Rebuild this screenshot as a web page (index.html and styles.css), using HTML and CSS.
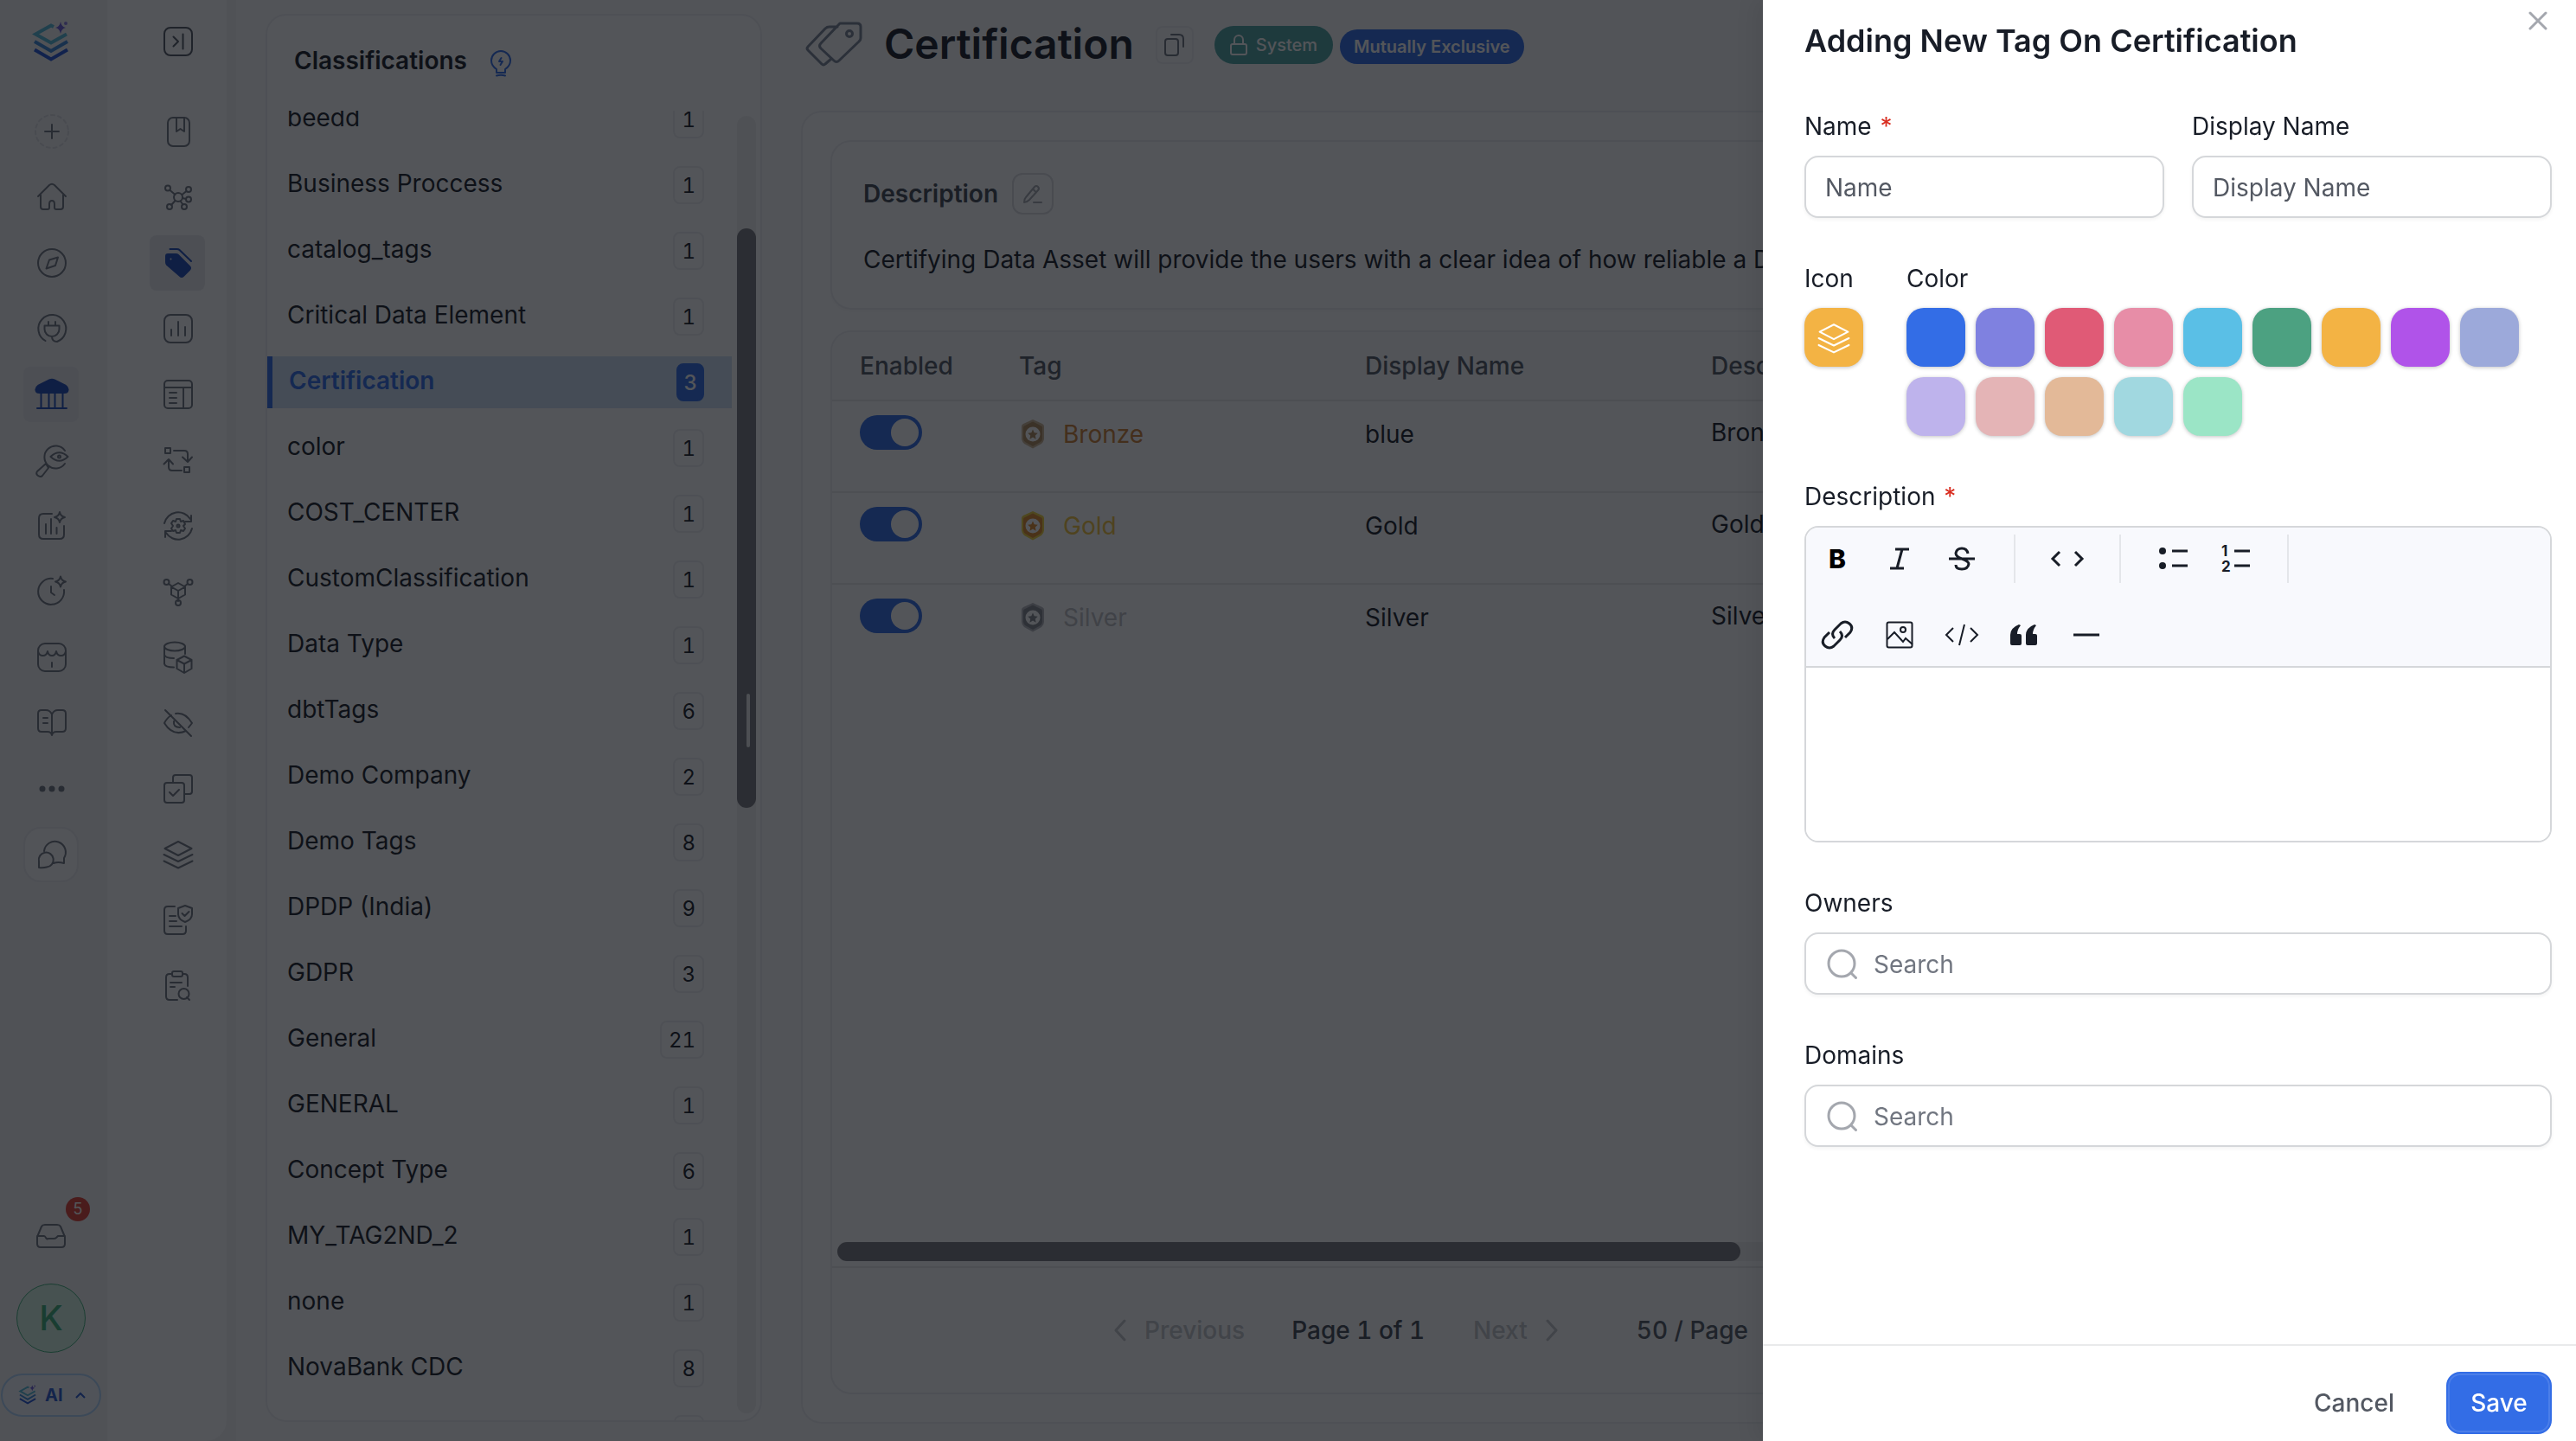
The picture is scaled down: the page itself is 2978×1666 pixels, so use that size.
FILE: index.html
```html
<!DOCTYPE html>
<html lang="en">
<head>
<meta charset="utf-8">
<title>Certification</title>
<link rel="stylesheet" href="styles.css">
</head>
<body>
<svg class="sprite" aria-hidden="true">
  <defs>
    <symbol id="logo" viewBox="0 0 44 50">
      <path d="M25 7 L22 5.500 L4 15.500 L22 25.500 L40 15.500" fill="none" stroke="#54b9d6" stroke-width="4"/>
      <path d="M3 24 L22 35 L41 24" fill="none" stroke="#3a87d8" stroke-width="4"/>
      <path d="M3 33.500 L22 44.500 L41 33.500" fill="none" stroke="#2456d6" stroke-width="4"/>
      <path d="M33 1 q1 6 6 7 q-5 1-6 7 q-1-6-6-7 q5-1 6-7z" fill="#6a5ad8" stroke="none"/>
      <circle cx="39" cy="3" r="2" fill="#8a7ae0" stroke="none"/>
    </symbol>
    <symbol id="layers" viewBox="0 0 36 36">
      <path d="M18 4 L33.500 12 L18 20 L2.500 12z M1.500 19 L18 27 L34.500 19 M1.500 26.500 L18 34.500 L34.500 26.500"/>
    </symbol>
    <symbol id="search" viewBox="0 0 36 36">
      <circle cx="17" cy="17" r="15"/><path d="M28 28 l5.500 5.500"/>
    </symbol>
    <symbol id="shield" viewBox="0 0 26 34">
      <path class="shield-edge" d="M13 0 L24 5 q2 1 2 3 V22 q0 3-3 6 L13 33.500 L3 28 q-3-3-3-6 V8 q0-2 2-3z"/>
      <path class="shield-core" d="M13 2.500 L23 7.500 q1 .5 1 2 V22 q0 2-2 4 L13 31 L4 26 q-2-2-2-4 V9.500 q0-1.500 1-2z"/>
      <circle cx="13" cy="17" r="8.500" fill="#fff"/>
      <path class="shield-core" d="M13 11.500 l1.700 3.800 4.100.5-3 2.800.8 4.100-3.600-2.100-3.600 2.100.8-4.100-3-2.800 4.100-.5z"/>
    </symbol>
  </defs>
</svg>

<div class="app">
  <nav class="rail" aria-label="Main">
    <a class="logo" href="#" aria-label="Home page"><svg width="44" height="50"><use href="#logo"/></svg></a>
    <div class="rail-items">
      <button class="rail-item" aria-label="Create"><svg class="ico" viewBox="0 0 40 40"><circle cx="20" cy="20" r="19" stroke-dasharray="4 4" stroke="#dcdde1"/><path d="M20 12v16M12 20h16"/></svg></button>
      <a class="rail-item" href="#" aria-label="Home"><svg class="ico" viewBox="0 0 40 40"><path d="M4 19 L17 6 q3-2.500 6 0 L36 19 M7 17 V31 q0 3 3 3 h5 q2 0 2-2 v-4 q0-4 3-4 t3 4 v4 q0 2 2 2 h5 q3 0 3-3 V17"/></svg></a>
      <a class="rail-item" href="#" aria-label="Explore"><svg class="ico" viewBox="0 0 40 40"><circle cx="20" cy="20" r="16"/><path d="M17 16.500 L27 13.500 L24 23 L13.500 26.500z"/></svg></a>
      <a class="rail-item" href="#" aria-label="Connections"><svg class="ico" viewBox="0 0 40 40"><path d="M12.500 34 A16 16 0 1 1 26 35 Q20 35 20 29 M11.500 16.500 h17 v4 a8.500 8.500 0 0 1-17 0z M16 12v4 M24 12v4"/></svg></a>
      <a class="rail-item active" href="#" aria-label="Govern"><svg class="ico" viewBox="0 0 40 40"><path fill="currentColor" d="M17 3.500 q3-1.500 6 0 L36 10 q3 2 2.500 5 t-4 3 H5.500 q-3.500 0-4-3 T4 10z"/><path d="M7.500 19v16M16.500 19v16M23.500 19v16M32.500 19v16M3 36h34"/></svg></a>
      <a class="rail-item" href="#" aria-label="Observability"><svg class="ico" viewBox="0 0 40 40"><path d="M35 9 A13 13 0 1 0 35 24 M18.500 16 q10-9.500 20 0 q-10 9.500-20 0z M13 24 L3 33 q-2 3 1 5 t5 0 L16 29z"/><circle cx="28.500" cy="16" r="1.500"/></svg></a>
      <a class="rail-item" href="#" aria-label="Insights"><svg class="ico" viewBox="0 0 40 40"><path d="M20 6 H10 q-5 0-5 5 v19 q0 5 5 5 h19 q5 0 5-5 V20 M13 18v11 M19 12v17 M25.500 22v7 M29 4 q1 5 6 6 q-5 1-6 6 q-1-5-6-6 q5-1 6-6z"/></svg></a>
      <a class="rail-item" href="#" aria-label="Activity"><svg class="ico" viewBox="0 0 40 40"><path d="M21 5 A15 15 0 1 0 34 18 M19 14v7l4 3 M30 2.500 q1 5 6 6 q-5 1-6 6 q-1-5-6-6 q5-1 6-6z"/></svg></a>
      <a class="rail-item" href="#" aria-label="Marketplace"><svg class="ico" viewBox="0 0 40 40"><rect x="4" y="4" width="32" height="32" rx="8"/><path d="M4 13 q1 5 5.500 5 t5.500-5 q1 5 5 5 t5-5 q1 5 5.500 5 t5.500-5 M20 26v5"/></svg></a>
      <a class="rail-item" href="#" aria-label="Learning"><svg class="ico" viewBox="0 0 40 40"><path d="M20 10 q-2-5-7-5 H8 q-4 0-4 4 v17 q0 4 4 4 h7 q4 0 5 4 q1-4 5-4 h7 q4 0 4-4 V9 q0-4-4-4 h-5 q-5 0-7 5 v23 M10 14h5 M10 20h5"/></svg></a>
      <button class="rail-item" aria-label="More"><svg class="ico" viewBox="0 0 40 40"><g fill="currentColor" stroke="none"><circle cx="9" cy="20" r="3.500"/><circle cx="20" cy="20" r="3.500"/><circle cx="31" cy="20" r="3.500"/></g></svg></button>
      <button class="rail-item boxed" aria-label="Chat"><svg class="ico" viewBox="0 0 40 40"><path d="M11 16 A12.500 12.500 0 1 1 34 24 V30 q-7-2-12 0 M5 35 V28 a8.500 8.500 0 1 1 9 6.500 q-4 1-9 .5z"/></svg></button>
    </div>
    <div class="rail-foot">
      <button class="inbox" aria-label="Notifications"><svg class="ico" viewBox="0 0 40 40"><path d="M4 22 L9 10 q1-2 4-2 h14 q3 0 4 2 l5 12 v8 q0 4-4 4 H8 q-4 0-4-4z M4 21 h8 q1 0 2 2 t3 1 h6 q2 0 3-1 t2-2 h8"/></svg><span class="inbox-count">5</span></button>
      <button class="avatar">K</button>
      <button class="ai"><svg width="22" height="24"><use href="#logo"/></svg>AI<svg class="ai-caret" viewBox="0 0 14 10"><path d="M2 8 L7 3 L12 8"/></svg></button>
    </div>
  </nav>

  <nav class="rail subrail" aria-label="Govern">
    <button class="expand" aria-label="Expand"><svg class="ico" viewBox="0 0 40 40"><rect x="4" y="4" width="32" height="32" rx="7"/><path d="M14.500 14.500 L20 20 L14.500 25.500 M25.500 11.500v17"/></svg></button>
    <div class="rail-items">
      <a class="rail-item" href="#" aria-label="Glossary"><svg class="ico" viewBox="0 0 40 40"><rect x="8" y="4" width="25" height="33" rx="6"/><path d="M18 4 V20 l4.500-3 l4.500 3 V4"/></svg></a>
      <a class="rail-item" href="#" aria-label="Ontology"><svg class="ico" viewBox="0 0 40 40"><circle cx="20" cy="20" r="5"/><circle cx="8" cy="9.500" r="3"/><circle cx="32" cy="11" r="3"/><circle cx="32" cy="22.500" r="3"/><circle cx="27" cy="31" r="3"/><circle cx="10" cy="31" r="3"/><path d="M10.500 12 l6 5 M24.500 17 l5-4 M25 21 l4 1 M22.500 24.500 l3 4 M16.500 24 L12 29"/></svg></a>
      <a class="rail-item active" href="#" aria-label="Tags"><svg class="ico" viewBox="0 0 40 40"><path fill="currentColor" fill-rule="evenodd" d="M6 12 q0-2 2-2 h9 q2 0 3 1 L33 24 q2 2 0 4 l-7 7 q-2 2-4 0 L7 22 q-1-1-1-3z M11.500 17.500 a2 2 0 1 0 0-4 a2 2 0 0 0 0 4z"/><path d="M10.500 4 h8 q2 0 3 1 L35 18"/></svg></a>
      <a class="rail-item" href="#" aria-label="Metrics"><svg class="ico" viewBox="0 0 40 40"><rect x="4" y="4" width="32" height="32" rx="7"/><path d="M12 21v7 M20 12v16 M28 18v10"/></svg></a>
      <a class="rail-item" href="#" aria-label="Data contracts"><svg class="ico" viewBox="0 0 40 40"><rect x="4" y="4" width="32" height="32" rx="4"/><path d="M4 12h32 M26 12v24 M10 18h8 M10 24h8 M10 30h8"/></svg></a>
      <a class="rail-item" href="#" aria-label="Workflows"><svg class="ico" viewBox="0 0 40 40"><rect x="5" y="6" width="6" height="6"/><rect x="27" y="28" width="6" height="6"/><path d="M15 9 h12 q4 0 4 4 v8 M25 16.500 l6 5.500 l5-5.500 M24 32 H13 q-4 0-4-4 v-8 M3.500 24.500 L9 19 l5 5.500"/></svg></a>
      <a class="rail-item" href="#" aria-label="Automations"><svg class="ico" viewBox="0 0 40 40"><path d="M4 17 A16.500 16.500 0 0 1 34 12 M35 8 v7 h-7 M36 23 A16.500 16.500 0 0 1 6 28 M5 33 v-7 h7"/><path d="M18 12 h4 l1 3 3-1 2 4-2 2 2 3-2 3-3-1-1 3 h-4 l-1-3-3 1-2-3 2-3-2-3 2-3 3 1z"/><circle cx="20" cy="20" r="1.500"/></svg></a>
      <a class="rail-item" href="#" aria-label="Data products"><svg class="ico" viewBox="0 0 40 40"><path d="M20 10 l8 4.500 v9 L20 28 l-8-4.500 v-9z M12 14.500 l8 4.500 l8-4.500 M20 19v12 M9 11 l4 3 M31 11 l-4 3"/><circle cx="6.500" cy="9" r="3"/><circle cx="33.500" cy="9" r="3"/><circle cx="20" cy="33" r="3"/></svg></a>
      <a class="rail-item" href="#" aria-label="Data assets"><svg class="ico" viewBox="0 0 40 40"><ellipse cx="16" cy="7.500" rx="12" ry="5"/><path d="M4 7.500 v20 q1 4 11 4 M28 7.500 V16 M4 17 q1 4 11 4 M27 18.500 l8.500 4.500 v10 L27 38 l-8.500-5 V23z M18.500 23 l8.500 4.500 l8.500-4.500 M27 28v9"/></svg></a>
      <a class="rail-item" href="#" aria-label="Masking"><svg class="ico" viewBox="0 0 40 40"><path d="M17 9 q11-2 19 11 l-4 5 M12 11 q-5 3-8 9 q10 16 25 9 M15 18 q-1 7 7 7 M5 5 L35 35"/></svg></a>
      <a class="rail-item" href="#" aria-label="Tasks"><svg class="ico" viewBox="0 0 40 40"><rect x="4" y="13" width="23" height="23" rx="3"/><path d="M14 13 V7 q0-3 3-3 h16 q3 0 3 3 v16 q0 3-3 3 h-6 M10 24 l4 4 l7-7"/></svg></a>
      <a class="rail-item" href="#" aria-label="Domains"><svg class="ico" viewBox="-2 -1 40 40"><use href="#layers" width="36" height="36"/></svg></a>
      <a class="rail-item" href="#" aria-label="Policies"><svg class="ico" viewBox="0 0 40 40"><path d="M16 4 H8 q-4 0-4 4 v24 q0 4 4 4 h17 q4 0 4-4 V27 M10 15h7 M10 21h8 M10 27h14 M28 3 l8 3 v7 q0 6-8 9 q-8-3-8-9 V6z M24.500 12 l3 3 l5-5"/></svg></a>
      <a class="rail-item" href="#" aria-label="Audit"><svg class="ico" viewBox="0 0 40 40"><rect x="13" y="3" width="12" height="6" rx="2"/><path d="M13 6 h-3 q-4 0-4 4 v22 q0 4 4 4 h9 M25 6 h2 q4 0 4 4 v10 M11 16h13 M11 21h5 M30 33 l3 3"/><circle cx="26.500" cy="29" r="6"/></svg></a>
    </div>
  </nav>

  <main class="content">
    <section class="side-card">
      <h2 class="side-title">Classifications
        <svg class="bulb" viewBox="0 0 24 34"><path d="M7 26 v-4 Q1 18 1 12 A11 11 0 0 1 23 12 Q23 18 17 22 v4z M7 29.500 q5-1.500 10 0 M12.500 9 l-2.500 4 h4 l-2.500 4"/></svg>
      </h2>
      <div class="side-body">
        <ul class="class-list">
          <li><a href="#" class="class-row"><span>beedd</span><b>1</b></a></li>
          <li><a href="#" class="class-row"><span>Business Proccess</span><b>1</b></a></li>
          <li><a href="#" class="class-row"><span>catalog_tags</span><b>1</b></a></li>
          <li><a href="#" class="class-row"><span>Critical Data Element</span><b>1</b></a></li>
          <li><a href="#" class="class-row selected"><span>Certification</span><b>3</b></a></li>
          <li><a href="#" class="class-row"><span>color</span><b>1</b></a></li>
          <li><a href="#" class="class-row"><span>COST_CENTER</span><b>1</b></a></li>
          <li><a href="#" class="class-row"><span>CustomClassification</span><b>1</b></a></li>
          <li><a href="#" class="class-row"><span>Data Type</span><b>1</b></a></li>
          <li><a href="#" class="class-row"><span>dbtTags</span><b>6</b></a></li>
          <li><a href="#" class="class-row"><span>Demo Company</span><b>2</b></a></li>
          <li><a href="#" class="class-row"><span>Demo Tags</span><b>8</b></a></li>
          <li><a href="#" class="class-row"><span>DPDP (India)</span><b>9</b></a></li>
          <li><a href="#" class="class-row"><span>GDPR</span><b>3</b></a></li>
          <li><a href="#" class="class-row"><span>General</span><b>21</b></a></li>
          <li><a href="#" class="class-row"><span>GENERAL</span><b>1</b></a></li>
          <li><a href="#" class="class-row"><span>Concept Type</span><b>6</b></a></li>
          <li><a href="#" class="class-row"><span>MY_TAG2ND_2</span><b>1</b></a></li>
          <li><a href="#" class="class-row"><span>none</span><b>1</b></a></li>
          <li><a href="#" class="class-row"><span>NovaBank CDC</span><b>8</b></a></li>
          <li><a href="#" class="class-row"><span></span><b></b></a></li>
        </ul>
        <div class="vscroll"><div class="vthumb"></div></div>
      </div>
      <span class="splitter"></span>
    </section>

    <section class="detail">
      <header class="detail-head">
        <svg class="tags-icon" viewBox="0 0 66 52"><path d="M40 2 H60 q4 0 4 4 V19 q0 2-2 4 L39 45 q-3 3-6 0 L18 31 q-3-3 0-6z M37 6 H28 q-3 0-5 2 L3 29 q-2 2 0 4 L19 49 q2 2 4 0 L30 43"/><circle cx="51" cy="14" r="3.500"/></svg>
        <h1>Certification</h1>
        <button class="copy" aria-label="Copy"><svg viewBox="0 0 24 28"><rect x="1" y="7" width="15" height="19" rx="3"/><path d="M8 2 h9 q5 0 5 5 v9"/></svg></button>
        <span class="pill system"><svg viewBox="0 0 20 24"><rect x="1" y="11" width="18" height="12" rx="2"/><path d="M5 11 V6 a5 5 0 0 1 10 0 v5"/></svg>System</span>
        <span class="pill exclusive">Mutually Exclusive</span>
      </header>
      <div class="detail-card">
        <section class="desc-card">
          <h3>Description <button class="edit" aria-label="Edit description"><svg viewBox="0 0 24 24"><path d="M14 4 q2-2 4 0 t0 4 L8 19 q-3 3-6 3 q0-4 2-6z M12 6.500 l4 4 M13 22h9"/></svg></button></h3>
          <p>Certifying Data Asset will provide the users with a clear idea of how reliable a Data Asset is.</p>
        </section>
        <section class="table-card">
          <div class="table-wrap">
            <table>
              <thead><tr><th class="c-on">Enabled</th><th class="c-mid">Tag</th><th class="c-mid">Display Name</th><th>Description</th></tr></thead>
              <tbody>
                <tr><td><input class="switch" type="checkbox" role="switch" aria-label="Enable Bronze" checked></td><td><a href="#" class="tag bronze"><svg><use href="#shield"/></svg>Bronze</a></td><td><span class="cell">blue</span></td><td>Bronze certified Data Asset.</td></tr>
                <tr><td><input class="switch" type="checkbox" role="switch" aria-label="Enable Gold" checked></td><td><a href="#" class="tag gold"><svg><use href="#shield"/></svg>Gold</a></td><td><span class="cell">Gold</span></td><td>Gold certified Data Asset.</td></tr>
                <tr class="last"><td><input class="switch" type="checkbox" role="switch" aria-label="Enable Silver" checked></td><td><a href="#" class="tag silver"><svg><use href="#shield"/></svg>Silver</a></td><td><span class="cell">Silver</span></td><td>Silver certified Data Asset.</td></tr>
              </tbody>
            </table>
          </div>
          <div class="hscroll"><div class="hthumb"></div></div>
          <footer class="pager">
            <button class="pg-off" disabled><svg viewBox="0 0 16 26"><path d="M13 2 L3 13 L13 24"/></svg>Previous</button>
            <span class="pg-now">Page 1 of 1</span>
            <button class="pg-off" disabled>Next<svg viewBox="0 0 16 26"><path d="M3 2 L13 13 L3 24"/></svg></button>
            <button class="pg-size">50 / Page</button>
          </footer>
        </section>
      </div>
    </section>
  </main>
</div>

<div class="mask"></div>
<form class="drawer" role="dialog" aria-labelledby="drawer-title">
  <div class="drawer-body">
    <h2 id="drawer-title">Adding New Tag On Certification</h2>
    <button class="close" type="button" aria-label="Close"><svg viewBox="0 0 22 22"><path d="M2 2 L20 20 M20 2 L2 20"/></svg></button>
    <div class="pair">
      <div class="field"><label for="name">Name <i>*</i></label><input id="name" class="box" type="text" placeholder="Name"></div>
      <div class="field"><label for="dname">Display Name</label><input id="dname" class="box" type="text" placeholder="Display Name"></div>
    </div>
    <div class="icon-color">
      <div class="field icon-field"><label for="icon">Icon</label><button id="icon" class="swatch icon-pick" type="button"><svg><use href="#layers"/></svg></button></div>
      <div class="field color-field" role="radiogroup" aria-labelledby="color-label"><span id="color-label" class="label">Color</span>
        <div class="swatches">
          <input type="radio" name="color" aria-label="Blue" class="swatch s1"><input type="radio" name="color" aria-label="Indigo" class="swatch s2"><input type="radio" name="color" aria-label="Red" class="swatch s3"><input type="radio" name="color" aria-label="Pink" class="swatch s4"><input type="radio" name="color" aria-label="Sky" class="swatch s5"><input type="radio" name="color" aria-label="Green" class="swatch s6"><input type="radio" name="color" aria-label="Amber" class="swatch s7"><input type="radio" name="color" aria-label="Purple" class="swatch s8"><input type="radio" name="color" aria-label="Periwinkle" class="swatch s9"><input type="radio" name="color" aria-label="Lavender" class="swatch s10"><input type="radio" name="color" aria-label="Rose" class="swatch s11"><input type="radio" name="color" aria-label="Tan" class="swatch s12"><input type="radio" name="color" aria-label="Aqua" class="swatch s13"><input type="radio" name="color" aria-label="Mint" class="swatch s14">
        </div>
      </div>
    </div>
    <div class="field">
      <label for="desc">Description <i>*</i></label>
      <div class="editor">
        <div class="toolbar" role="toolbar">
          <button type="button" class="bold" aria-label="Bold">B</button>
          <button type="button" aria-label="Italic"><svg viewBox="0 0 40 40"><path d="M15 9h16 M9 31h16 M23 9 L17 31"/></svg></button>
          <button type="button" aria-label="Strikethrough"><svg viewBox="0 0 40 40"><path d="M27 14 q-1-6-7-6 t-7 5.500 q0 4 7 6.500 q8 3 8 6 q-1 6-8 6 t-7-5 M5 20h30"/></svg></button>
          <span class="sep"></span>
          <button type="button" aria-label="Inline code"><svg viewBox="0 0 40 40"><path d="M11 12 L3 20 L11 28 M29 12 L37 20 L29 28"/></svg></button>
          <span class="sep"></span>
          <button type="button" aria-label="Bulleted list"><svg viewBox="0 0 40 40"><g fill="#181d27" stroke="none"><circle cx="8" cy="11" r="4"/><circle cx="8" cy="28" r="4"/></g><path d="M19 11h18 M19 28h18"/></svg></button>
          <button type="button" aria-label="Numbered list"><svg viewBox="0 0 40 40"><text x="4" y="17">1</text><text x="4" y="35">2</text><path d="M19 11h18 M19 28h18"/></svg></button>
          <span class="sep"></span>
          <button type="button" aria-label="Link"><svg viewBox="0 0 40 40"><path d="M17 24 q-5-5 0-10 l7-7 q5-4 10 0 t1 10 L29 23 M23 16 q5 5 0 10 l-7 7 q-5 4-10 0 t-1-10 L11 17"/></svg></button>
          <button type="button" aria-label="Image"><svg class="thin" viewBox="0 0 40 40"><rect x="5.500" y="5.500" width="29" height="29" rx="2"/><circle cx="24" cy="14" r="3"/><path d="M6 25 l8-8 l10 11 l3-4 l8 7"/></svg></button>
          <button type="button" aria-label="Code block"><svg class="thin" viewBox="0 0 40 40"><path d="M10 12 L2 20 L10 28 M30 12 L38 20 L30 28 M23 8 L17 32"/></svg></button>
          <button type="button" aria-label="Quote"><svg viewBox="0 0 40 40"><path fill="#181d27" stroke="none" d="M14 8 l2 1 q-4 5-4 10 h3 q2 0 2 2 v9 q0 2-2 2 H6 q-2 0-2-2 v-10 q0-8 10-12z M32 8 l2 1 q-4 5-4 10 h3 q2 0 2 2 v9 q0 2-2 2 h-9 q-2 0-2-2 v-10 q0-8 10-12z"/></svg></button>
          <button type="button" aria-label="Divider"><svg viewBox="0 0 40 40"><path d="M5 20h30"/></svg></button>
        </div>
        <textarea id="desc"></textarea>
      </div>
    </div>
    <div class="field"><label for="owners">Owners</label><div class="box search"><svg><use href="#search"/></svg><input id="owners" type="text" placeholder="Search"></div></div>
    <div class="field"><label for="domains">Domains</label><div class="box search"><svg><use href="#search"/></svg><input id="domains" type="text" placeholder="Search"></div></div>
  </div>
  <footer class="drawer-foot">
    <button type="button" class="cancel">Cancel</button>
    <button type="submit" class="save">Save</button>
  </footer>
</form>
</body>
</html>
```
FILE: styles.css
```css
* { box-sizing: border-box; }
body {
  margin: 0;
  background: #f5f5f6;
  color: #181d27;
  font: 400 28px/40px Inter, "Noto Sans", sans-serif;
  overflow: hidden;
}
h1, h2, h3, p, ul { margin: 0; padding: 0; list-style: none; }
a { color: inherit; text-decoration: none; }
button { margin: 0; padding: 0; border: 0; background: none; color: inherit; font: inherit; cursor: pointer; }
svg { fill: none; stroke: currentColor; stroke-width: 2; stroke-linecap: round; stroke-linejoin: round; flex: none; }
.sprite { position: absolute; width: 0; height: 0; }

.app { display: flex; height: 100vh; }

/* Navigation rails */
.rail {
  display: flex;
  flex-direction: column;
  flex: none;
  width: 124px;
  padding: 24px 33px 24px 27px;
  background: #f5f5f6;
  color: #717680;
}
.logo { display: flex; height: 50px; margin-bottom: 46px; padding-left: 10px; }
.logo svg, .ai svg { stroke-linecap: butt; stroke-linejoin: miter; }
.rail-items { display: flex; flex-direction: column; gap: 12px; }
.rail-item, .expand { display: flex; align-items: center; justify-content: center; width: 64px; height: 64px; border-radius: 8px; }
.ico { width: 40px; height: 40px; }
.rail-items .ico, .expand .ico { margin-left: 2px; }
.rail-item.active { background: #ebebee; color: #1d4ab8; }
.rail-item.boxed { border: 2px solid #eaeaed; border-radius: 20px; background: #fafafa; }
.subrail { width: 138px; padding: 16px 25px 24px 49px; background: #fdfdfd; border-radius: 0 0 24px 0; }
.expand { color: #535862; margin-bottom: 40px; }
.rail-foot { display: flex; flex-direction: column; align-items: center; gap: 36px; margin: auto -27px 4px; }
.inbox { position: relative; display: flex; }
.inbox-count {
  position: absolute; left: 37px; top: -24px; width: 28px; height: 28px; border-radius: 50%;
  background: #df4034; color: #fff; font-size: 18px; line-height: 28px; text-align: center;
}
.avatar { width: 80px; height: 80px; border: 1px solid #3fae79; border-radius: 50%; background: #d8f6e4; color: #3fae79; font-size: 40px; font-weight: 500; margin-bottom: -12px; }
.ai { display: flex; align-items: center; gap: 9px; width: 116px; height: 50px; padding-left: 18px; border: 2px solid #b2d6fb; border-radius: 25px; background: #f5f9ff; color: #2a5bd0; font-size: 20px; font-weight: 700; }
.ai-caret { width: 14px; height: 10px; margin-left: 4px; }

/* Page content */
.content {
  display: grid;
  grid-template-columns: minmax(320px, 574px) minmax(0, 1fr);
  gap: 45px;
  flex: 1;
  min-width: 0;
  margin-left: 11px;
  padding: 16px 34px 20px 34px;
  background: #fbfbfc;
}
.side-card { position: relative; display: flex; flex-direction: column; min-height: 0; margin-bottom: 2px; border: 2px solid #eeeff1; border-radius: 24px; background: #fff; overflow: hidden; }
.side-title { display: flex; gap: 27px; margin: 32px 0 36px 31px; font-size: 28px; font-weight: 600; }
.bulb { width: 24px; height: 34px; margin-top: 8px; color: #2f6be6; }
.side-body { display: flex; flex: 1; min-height: 0; }
.class-list { flex: 1; overflow: hidden; }
.class-list li { margin-bottom: 16px; }
.class-list li:first-child { margin-top: -20px; }
.class-row { display: flex; align-items: flex-start; justify-content: space-between; height: 60px; padding: 8px 32px 8px 23px; }
.class-row b { min-width: 35px; height: 44px; padding: 0 8px; border: 2px solid #eeeff1; border-radius: 8px; font-size: 24px; font-weight: 400; line-height: 42px; text-align: center; font-variant-numeric: tabular-nums; }
.class-row.selected { border-left: 6px solid #2f6be6; padding-left: 19px; background: #cfe2f5; color: #2f6be6; font-weight: 600; }
.class-row.selected b { min-width: 31px; padding: 0 6px; border-color: #2f6be6; background: #2f6be6; color: #fff; font-weight: 500; }
.vscroll { flex: none; width: 22px; margin: 6px 5px 8px 6px; border-radius: 11px; background: #f1f1f1; }
.vthumb { height: 670px; margin-top: 130px; border-radius: 11px; background: #7b7b80; }
.splitter { position: absolute; right: 12px; top: 784px; width: 4px; height: 62px; border-radius: 2px; background: #e9eaeb; }

.detail { display: flex; flex-direction: column; min-width: 0; }
.detail-head { display: flex; align-items: flex-end; height: 112px; padding: 0 0 54px 5px; }
.tags-icon { width: 66px; height: 52px; margin-bottom: -3px; color: #7a8494; stroke-width: 3px; }
h1 { margin: 0 25px; font-size: 48px; font-weight: 600; line-height: 46px; }
.copy, .edit { display: flex; align-items: center; justify-content: center; width: 44px; height: 44px; border: 2px solid #eeeff1; border-radius: 8px; color: #717680; }
.copy svg { width: 24px; height: 28px; }
.pill { display: flex; align-items: center; color: #fff; border-radius: 22px; font-size: 20px; font-weight: 500; }
.system { gap: 10px; height: 44px; margin: 0 8px 0 24px; padding: 0 18px; background: #4da3a1; }
.system svg { width: 20px; height: 24px; }
.exclusive { height: 40px; padding: 0 16px; background: #2f6be6; font-weight: 600; }
.detail-card { display: flex; flex-direction: column; gap: 24px; flex: 1; min-height: 0; padding: 32px; border: 2px solid #eeeff1; border-radius: 24px; background: #fff; }
.desc-card { padding: 36px; border: 2px solid #eeeff1; border-radius: 24px; box-shadow: 0 2px 4px #0a0d1208; }
.desc-card h3 { display: flex; align-items: center; gap: 16px; margin-bottom: 32px; color: #414651; font-size: 28px; font-weight: 600; }
.edit { width: 48px; height: 48px; border-color: #dcdde0; border-radius: 12px; color: #a4a7ae; }
.edit svg { width: 24px; height: 24px; }
.table-card { display: flex; flex-direction: column; flex: 1; min-height: 0; border: 2px solid #eeeff1; border-radius: 24px; overflow: hidden; }
.table-wrap { flex: 1; }
table { width: 100%; table-layout: fixed; border-collapse: separate; border-spacing: 0; }
th, td { padding: 0 16px 0 32px; border-bottom: 2px solid #e9eaeb; text-align: left; vertical-align: top; }
th { height: 80px; vertical-align: middle; background: #fafafa; color: #535862; font-weight: 500; }
td { height: 106px; padding-top: 16px; }
.last td { border-bottom: 0; }
.c-on { width: 184px; }
.c-mid { width: 400px; }
.cell { line-height: 44px; }
.tag { display: flex; align-items: center; gap: 22px; height: 44px; padding-left: 3px; }
.tag svg { width: 26px; height: 34px; stroke: none; }
.shield-core { fill: currentColor; }
.bronze { color: #cd7f32; }
.bronze svg { color: #b08a5a; }
.bronze svg { fill: #cdb595; }
.gold { color: #f0c43c; }
.gold svg { color: #e08a28; fill: #f0d23c; }
.silver { color: #c0c0c4; }
.silver svg { color: #84868c; fill: #b4b6bb; }
.switch { appearance: none; display: block; width: 72px; height: 40px; margin: 0; padding: 4px; border-radius: 20px; background: #2f6be6; }
.switch::before { content: ""; display: block; width: 32px; height: 32px; margin-left: 32px; border-radius: 50%; background: #fff; }
.hscroll { height: 22px; margin: 0 6px 6px; border-radius: 11px; background: #f1f1f1; }
.hthumb { width: 1044px; height: 22px; border-radius: 11px; background: #7b7b80; }
.pager { display: flex; align-items: center; height: 146px; padding-left: 325px; border-top: 2px solid #e9eaeb; font-weight: 500; }
.pager button { display: flex; align-items: center; gap: 20px; }
.pager svg { width: 16px; height: 26px; stroke-width: 3px; }
.pg-off, .pg-off:disabled { color: #c4c5c9; }
.pg-now { margin: 0 56px 0 54px; color: #414651; font-variant-numeric: tabular-nums; }
.pager .pg-size { margin-left: 90px; color: #535862; font-variant-numeric: tabular-nums; }

/* Drawer */
.mask { position: fixed; inset: 0; background: rgba(10, 13, 18, .7); }
.drawer { position: fixed; top: 0; right: 0; bottom: 0; display: flex; flex-direction: column; width: 940px; max-width: 100%; background: #fff; box-shadow: -8px 0 24px #0a0d1214; }
.drawer-body { position: relative; display: flex; flex-direction: column; gap: 50px; flex: 1; padding: 23px 28px 0 48px; }
.drawer h2 { margin-bottom: 5px; font-size: 36px; font-weight: 600; line-height: 48px; }
.close { position: absolute; right: 33px; top: 13px; display: flex; color: #a4a7ae; }
.close svg { width: 22px; height: 22px; stroke-width: 3px; }
.field { display: flex; flex-direction: column; gap: 14px; min-width: 0; }
label, .label { display: block; height: 40px; color: #181d27; }
label i { margin-left: 2px; color: #d92d20; font-style: normal; }
.pair { display: grid; grid-template-columns: 1fr 1fr; gap: 32px; }
.box { width: 100%; height: 72px; padding: 2px 22px 0; border: 2px solid #d5d7da; border-radius: 16px; background: #fff; font: inherit; box-shadow: 0 2px 4px #0a0d120d; }
.box::placeholder { color: #535862; opacity: 1; }
.icon-color { display: flex; gap: 50px; }
.icon-field { flex: none; width: 68px; }
.color-field { flex: 1; }
.swatches { display: flex; flex-wrap: wrap; gap: 12px; }
.swatch { appearance: none; width: 68px; height: 68px; margin: 0; border-radius: 20px; box-shadow: 0 1px 4px #0a0d1240; }
.icon-pick { display: flex; align-items: center; justify-content: center; background: #f3b344; color: #fff; }
.icon-pick svg { width: 38px; height: 38px; }
.s1 { background: #336de6; } .s2 { background: #7f81e0; } .s3 { background: #e05a76; } .s4 { background: #e78da7; }
.s5 { background: #5abfe6; } .s6 { background: #4ca181; } .s7 { background: #f3b344; } .s8 { background: #b053e9; }
.s9 { background: #9ca9da; } .s10 { background: #beb3ec; } .s11 { background: #e4b4b6; } .s12 { background: #e3b998; }
.s13 { background: #a1d8e0; } .s14 { background: #9be5c6; }
.editor { height: 366px; display: flex; flex-direction: column; border: 2px solid #d5d7da; border-radius: 16px; overflow: hidden; }
.toolbar { display: flex; flex-wrap: wrap; row-gap: 32px; height: 162px; padding: 8px 240px 8px 0; align-content: flex-start; background: #f8f9fd; border-bottom: 2px solid #d5d7da; }
.toolbar button { display: flex; align-items: center; justify-content: center; width: 72px; height: 56px; color: #181d27; }
.toolbar svg { width: 40px; height: 40px; stroke-width: 3px; stroke-linecap: butt; stroke-linejoin: miter; }
.toolbar .thin { stroke-width: 2px; }
.toolbar .bold { font-size: 30px; font-weight: 800; color: #000; }
.toolbar text { fill: #181d27; stroke: none; font-size: 17px; font-weight: 700; }
.sep { width: 2px; height: 56px; margin: 0 24px; background: #e4e6ea; }
textarea { flex: 1; border: 0; padding: 20px; resize: none; outline: 0; font: inherit; }
.search { display: flex; align-items: center; gap: 18px; padding-left: 24px; }
.search svg { width: 36px; height: 36px; color: #a4a7ae; stroke-width: 3px; }
.search input { flex: 1; border: 0; padding: 0; outline: 0; font: inherit; background: none; }
.search input::placeholder { color: #717680; opacity: 1; }
.drawer-foot { display: flex; justify-content: flex-end; gap: 60px; padding: 30px 28px 8px; border-top: 2px solid #e9eaeb; font-weight: 500; }
.cancel { color: #535862; }
.save { width: 122px; height: 72px; border: 2px solid #336de6; border-radius: 16px; background: #336de6; color: #fff; box-shadow: inset 0 0 0 2px #ffffff1f; }
```
